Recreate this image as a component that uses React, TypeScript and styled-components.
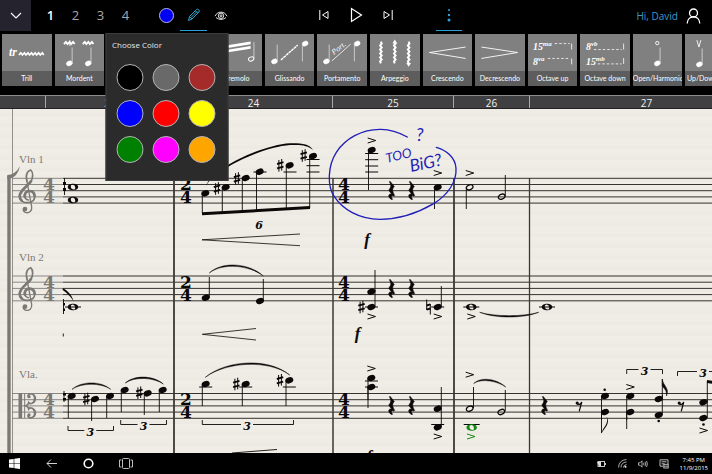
import React from "react";
import styled, { createGlobalStyle } from "styled-components";

const Global = createGlobalStyle`
  * { box-sizing: border-box; }
  html, body { margin: 0; background: #000; }
  body { font-family: "Open Sans", "Noto Sans", sans-serif; }
  button { font: inherit; border: 0; padding: 0; background: none; color: inherit; cursor: pointer; }
`;

const Page = styled.div`
  display: flex;
  flex-direction: column;
  height: 100vh;
  overflow: hidden;
  background: #000;
`;

const TopBar = styled.header`
  display: grid;
  grid-template-columns: 1fr auto 1fr;
  flex: none;
  height: 32px;
  color: #fff;
`;

const Group = styled.div<{ $spread?: boolean }>`
  display: flex;
  align-items: flex-start;
  justify-content: ${(p) => (p.$spread ? "space-between" : "flex-start")};
  padding: ${(p) => (p.$spread ? "0 11px 0 32px" : "0")};
`;

const BarButton = styled.button<{ $w: number; $active?: boolean }>`
  display: flex;
  align-items: center;
  justify-content: center;
  flex: none;
  width: ${(p) => p.$w}px;
  height: 31px;
  border-bottom: 1px solid ${(p) => (p.$active ? "#2b9fd6" : "transparent")};
`;

const MenuButton = styled(BarButton)`
  background: #24232e;
  margin-right: 7px;
`;

const VoiceButton = styled(BarButton)<{ $on?: boolean }>`
  font-size: 13px;
  font-weight: ${(p) => (p.$on ? 600 : 400)};
  color: ${(p) => (p.$on ? "#fff" : "#a8a8a8")};
`;

const ColorAnchor = styled.div`
  position: relative;
  margin-left: 15px;
`;

const CurrentColor = styled.span`
  width: 15px;
  height: 15px;
  border-radius: 50%;
  background: #0000f5;
  border: 1px solid #b9b9d8;
`;

const Popup = styled.section`
  position: absolute;
  z-index: 2;
  top: 33px;
  left: 50%;
  transform: translateX(-50%);
  width: 123px;
  height: 148px;
  padding: 4px 6px;
  background: #2b2b2b;
  border: 1px solid #3c3c3c;
`;

const PopupTitle = styled.h2`
  margin: 0;
  font-size: 8px;
  line-height: 14px;
  font-weight: 400;
  color: #e6e6e6;
`;

const Swatches = styled.div`
  display: grid;
  grid-template-columns: repeat(3, 27px);
  gap: 9px;
  padding: 12px 4px;
`;

const Swatch = styled.button<{ $color: string }>`
  width: 27px;
  height: 27px;
  border-radius: 50%;
  border: 1px solid #b4b4b4;
  background: ${(p) => p.$color};
`;

const UserLink = styled.a`
  display: flex;
  align-items: center;
  gap: 8px;
  height: 31px;
  font-size: 10px;
  color: #3a9ad0;
  text-decoration: none;
`;

const Palette = styled.nav`
  display: grid;
  grid-template-columns: repeat(14, minmax(0, 1fr));
  gap: 3px;
  flex: none;
  margin-right: -23px;
  padding: 2px 0 9px 2px;
`;

const Tile = styled.button`
  display: flex;
  flex-direction: column;
  height: 52px;
  background: #808080;
  color: #fff;
  overflow: hidden;
`;

const TileArt = styled.span`
  display: flex;
  justify-content: center;
  width: 100%;
  height: 37px;
`;

const TileLabel = styled.span`
  width: 100%;
  background: #5d5d5d;
  font-family: Lato, "Open Sans", sans-serif;
  font-size: 7px;
  line-height: 15px;
  text-align: center;
  white-space: nowrap;
`;

const Ruler = styled.div`
  display: flex;
  flex: none;
  height: 14px;
  background: #404042;
  border-top: 1px solid #8c8c8c;
  border-bottom: 1px solid #222;
  overflow: hidden;
`;

const Bar = styled.div<{ $w: number }>`
  flex: none;
  width: ${(p) => p.$w}px;
  border-right: 1px solid #a9a9a9;
  color: #f2f2f2;
  font-size: 10px;
  line-height: 14px;
  text-align: center;
`;

const Score = styled.main`
  flex: 1;
  min-height: 0;
  overflow: hidden;
  background: repeating-linear-gradient(180deg, #efebe5 0 4px, #edeae3 4px 7px, #f0ece6 7px 11px);

  svg { display: block; }
`;

const TaskBar = styled.footer`
  display: flex;
  align-items: center;
  justify-content: space-between;
  flex: none;
  height: 21px;
  padding: 0 4px 0 6px;
  color: #fff;
`;

const TaskGroup = styled.div<{ $gap: number }>`
  display: flex;
  align-items: center;
  gap: ${(p) => p.$gap}px;
`;

const TaskButton = styled.button`
  display: flex;
  align-items: center;
  justify-content: center;
  height: 21px;
  min-width: 17px;
`;

const Clock = styled.time`
  margin-left: 3px;
  font-size: 6px;
  line-height: 8px;
  text-align: center;
`;

const ink = { fill: "none", stroke: "currentColor" } as const;

/* ---------- palette drawings, on a 50 x 37 canvas ---------- */

const TileSvg = ({ children }: { children: React.ReactNode }) => (
  <svg width="50" height="37" viewBox="0 0 50 37" fill="#fff" stroke="none">{children}</svg>
);

const SmallNote = ({ x, y, h = 15, down, open }: { x: number; y: number; h?: number; down?: boolean; open?: boolean }) => (
  <g>
    <ellipse cx={x} cy={y} rx={open ? 2.8 : 3.1} ry={open ? 2 : 2.4} transform={`rotate(-25 ${x} ${y})`} fill={open ? "none" : "#fff"} stroke="#fff" strokeWidth={open ? 1 : 0.4} />
    <path d={down ? `M${x - 2.8} ${y}v${h + 2}` : `M${x + 2.8} ${y}v${-h}`} stroke="#ddd" strokeWidth="0.8" />
  </g>
);

const zigzag = (x: number, y: number, n: number) => {
  let d = `M${x} ${y}`;
  for (let i = 0; i < n; i++) d += "l2 -2.2l1.6 2.2";
  return d;
};

const art: Record<string, React.ReactNode> = {
  Trill: (
    <>
      <text x="7" y="22" fontFamily="Liberation Serif, serif" fontSize="12" fontWeight="700" fontStyle="italic">tr</text>
      <path d={zigzag(17, 21, 7)} {...ink} strokeWidth="1.6" />
    </>
  ),
  Mordent: (
    <>
      <path d={zigzag(9, 10, 3)} {...ink} strokeWidth="1.8" />
      <path d="M15 6v6" {...ink} strokeWidth="0.8" />
      <path d={zigzag(28, 10, 3)} {...ink} strokeWidth="1.8" />
      <SmallNote x={14.5} y={29.5} h={16} />
      <SmallNote x={33.5} y={29.5} h={16} />
    </>
  ),
  Turn: <path d="M17 19c0-7 7-4 8-1s8 6 8-1" {...ink} strokeWidth="2" />,
  Fall: <path d="M17 10c2 10 8 15 16 17" {...ink} strokeWidth="1.4" />,
  Tremolo: (
    <>
      <path d="M8 12.5l31-5v2.600l-31 5zM8 17l31-5v2.600l-31 5z" />
      <SmallNote x={39.500} y={25} h={17} open />
    </>
  ),
  Glissando: (
    <>
      <SmallNote x={9.500} y={27.500} h={17} />
      <path d="M16 26L33 11" {...ink} strokeWidth="1.4" strokeDasharray="3 .5" />
      <SmallNote x={40.500} y={9.500} h={16} down />
    </>
  ),
  Portamento: (
    <>
      <SmallNote x={9.500} y={27.500} h={17} />
      <path d="M15 27L34 10" {...ink} strokeWidth="0.8" />
      <text x="17" y="21" fontFamily="Liberation Serif, serif" fontSize="8" fontStyle="italic" transform="rotate(-38 17 21)">Port.</text>
      <SmallNote x={40.500} y={9.500} h={16} down />
    </>
  ),
  Arpeggio: (
    <>
      {[11, 25, 39].map((x) => (
        <path key={x} d={`M${x} 7.5l.8 2l-1.600 2l1.600 2l-1.600 2l1.600 2l-1.600 2l1.600 2l-1.600 2l1.600 2l-1.600 2l.8 2`} {...ink} strokeWidth="2" />
      ))}
      <path d="M25 5.500l2.400 4h-4.800zM39 33l2.400-4h-4.800z" />
    </>
  ),
  Crescendo: <path d="M43 13L6.500 18.500L43 24.500" {...ink} strokeWidth="0.9" />,
  Decrescendo: <path d="M6.500 13L43 18.500L6.500 24.500" {...ink} strokeWidth="0.9" />,
  "Octave up": (
    <g fontFamily="Liberation Serif, serif" fontWeight="700" fontStyle="italic">
      <text x="5" y="16" fontSize="10">15</text><text x="15" y="12" fontSize="7">ma</text>
      <text x="5" y="31" fontSize="10">8</text><text x="10" y="27" fontSize="7">va</text>
      <path d="M27 9.500H42M20 24.500H42" {...ink} strokeWidth="0.8" strokeDasharray="2.500 2" />
      <path d="M44 9.500v6M44 24.500v6" {...ink} strokeWidth="0.8" />
    </g>
  ),
  "Octave down": (
    <g fontFamily="Liberation Serif, serif" fontWeight="700" fontStyle="italic">
      <text x="6" y="16" fontSize="10">8</text><text x="11" y="12" fontSize="7">vb</text>
      <text x="6" y="31" fontSize="10">15</text><text x="16" y="27" fontSize="7">mb</text>
      <path d="M14 15.500H42M18 30H42" {...ink} strokeWidth="0.8" strokeDasharray="2.500 2" />
      <path d="M44 9.500v6M44 24v6" {...ink} strokeWidth="0.8" />
    </g>
  ),
  "Open/Harmonic": (
    <>
      <circle cx="24.500" cy="9" r="1.700" {...ink} strokeWidth="0.9" />
      <SmallNote x={24.500} y={29.500} h={16} />
    </>
  ),
  "Up/Down Bow": (
    <>
      <path d="M12 6l2 7l2-7" {...ink} strokeWidth="0.9" />
      <SmallNote x={14.500} y={30.500} h={16} />
      <path d="M32 13v-6h5v6" {...ink} strokeWidth="0.9" />
      <SmallNote x={34.500} y={30.500} h={16} />
    </>
  ),
};

/* ---------- notation symbols ---------- */

const Head = ({ x, y, open }: { x: number; y: number; open?: boolean }) => (
  <g transform={`translate(${x} ${y}) rotate(-22)`}>
    <ellipse rx={open ? 3.5 : 4.1} ry={open ? 2.4 : 3} fill={open ? "none" : "currentColor"} stroke={open ? "currentColor" : "none"} strokeWidth="1.3" />
  </g>
);

const Whole = ({ x, y }: { x: number; y: number }) => (
  <path
    transform={`translate(${x} ${y})`}
    fillRule="evenodd"
    d="M-5.200 0C-5.200-4.300 5.200-4.300 5.200 0S-5.200 4.300-5.200 0ZM-2.200-.8C-2.400 1.700 0 2.800 1.400 2.400C3.200 1.500 2 -2.600 -.4 -2.600C-1.500-2.600-2.100-1.900-2.200-.8Z"
  />
);

const V = ({ x, a, b, w = 0.9 }: { x: number; a: number; b: number; w?: number }) => (
  <path d={`M${x} ${a}V${b}`} {...ink} strokeWidth={w} />
);

const Ledger = ({ x, y, r = 6.500 }: { x: number; y: number; r?: number }) => (
  <path d={`M${x - r} ${y}H${x + r}`} {...ink} strokeWidth="1" />
);

const Sharp = ({ x, y }: { x: number; y: number }) => (
  <g transform={`translate(${x} ${y})`} {...ink}>
    <path d="M-1.400-5.300V6.300M1.400-6.300V5.300" strokeWidth="1" />
    <path d="M-3.200-1.300L3.200-3.100M-3.200 3.100L3.200 1.300" strokeWidth="1.900" />
  </g>
);

const Natural = ({ x, y }: { x: number; y: number }) => (
  <g transform={`translate(${x} ${y})`} {...ink}>
    <path d="M-1.800-7.500V3M1.800-3V7.500" strokeWidth="1" />
    <path d="M-1.800-1.500L1.800-2.700M-1.800 2.700L1.800 1.500" strokeWidth="1.900" />
  </g>
);

const Accent = ({ x, y }: { x: number; y: number }) => (
  <path d={`M${x - 4} ${y - 2.500}L${x + 4} ${y}L${x - 4} ${y + 2.500}`} {...ink} strokeWidth="1" />
);

const Rest = ({ x, y }: { x: number; y: number }) => (
  <path
    transform={`translate(${x} ${y}) scale(.3333) translate(-202 -226)`}
    d="M196 198L209 214C202 222 203 227 210 241L208 243C200 239 197 244 204 252L202 254C189 248 189 234 201 237L192 225C200 216 200 210 194 200Z"
    stroke="currentColor"
    strokeWidth="1.500"
  />
);

const EighthRest = ({ x, y }: { x: number; y: number }) => (
  <g transform={`translate(${x} ${y})`}>
    <circle cx="-1.800" cy="-3.500" r="1.600" />
    <path d="M-2-2.500C0-1.500 2-2.500 2.800-4.500L.2 4.800" {...ink} strokeWidth="1.200" />
  </g>
);

const Slur = ({ x1, y1, x2, y2, rise }: { x1: number; y1: number; x2: number; y2: number; rise: number }) => {
  const q = (x2 - x1) / 4;
  return (
    <path
      d={`M${x1} ${y1}C${x1 + q} ${y1 - rise} ${x2 - q} ${y2 - rise} ${x2} ${y2}C${x2 - q} ${y2 - rise + 1.800} ${x1 + q} ${y1 - rise + 1.800} ${x1} ${y1}Z`}
      stroke="currentColor"
      strokeWidth="0.5"
    />
  );
};

const Num = ({ x, y, children }: { x: number; y: number; children: string }) => (
  <text x={x} y={y + 4} textAnchor="middle" fontFamily="DejaVu Serif, serif" fontWeight="700" fontStyle="italic" fontSize="11">{children}</text>
);

const Tuplet = ({ x1, x2, y, h, n }: { x1: number; x2: number; y: number; h: number; n: number }) => (
  <g>
    <path d={`M${x1} ${y + h}V${y}H${n - 6}M${n + 6} ${y}H${x2}V${y + h}`} {...ink} strokeWidth="0.9" />
    <Num x={n} y={y + 1}>3</Num>
  </g>
);

const Meter = ({ x, top, beats }: { x: number; top: number; beats: string }) => (
  <g fontFamily="DejaVu Serif, serif" fontWeight="700" fontSize="17" textAnchor="middle">
    <text x={x} y={top + 12}>{beats}</text>
    <text x={x} y={top + 25}>4</text>
  </g>
);

const Forte = ({ x, y }: { x: number; y: number }) => (
  <text x={x} y={y} textAnchor="middle" fontFamily="Liberation Serif, serif" fontWeight="700" fontStyle="italic" fontSize="17">f</text>
);

const Treble = ({ y }: { y: number }) => (
  <g transform={`translate(0 ${y}) scale(.3333) translate(0 -114)`} {...ink} strokeLinecap="round">
    <path d="M81 124C75 102 84 92 92 90C101 98 99 114 92 126C83 138 59 149 59 168C59 183 72 189 84 188C99 187 105 178 104 168C103 157 96 152 88 153C77 154 71 163 74 171C76 176 79 179 85 180" strokeWidth="5" />
    <path d="M93 124C82 140 60 150 59 168C59 174 61 179 65 182M75 171C72 161 79 153 88 153C97 153 103 158 104 168" strokeWidth="8" />
    <path d="M80 120L95 200C97 214 87 219 79 218C72 217 69 213 70 207" strokeWidth="4" />
    <circle cx="75" cy="207" r="7" fill="currentColor" stroke="none" />
  </g>
);

const Alto = ({ y }: { y: number }) => (
  <g transform={`translate(0 ${y}) scale(.3333) translate(0 -115)`} {...ink}>
    <path d="M61 115V190" strokeWidth="11" />
    <path d="M74 115V190" strokeWidth="3" />
    <path d="M84 124C82 114 104 112 104 130C104 148 90 148 86 143C85 149 81 151 77 152.500C81 154 85 156 86 162C90 157 104 157 104 175C104 193 82 191 84 181" strokeWidth="5" />
    <path d="M102 120C108 128 106 136 102 142M102 163C108 170 106 179 102 185" strokeWidth="5" />
    <circle cx="87" cy="125" r="5" fill="currentColor" stroke="none" />
    <circle cx="87" cy="180" r="5" fill="currentColor" stroke="none" />
  </g>
);

const Staff = ({ y }: { y: number }) => (
  <g {...ink}>
    {[0, 1, 2, 3, 4].map((i) => {
      const ly = y + i * 6.200;
      return (
        <g key={i}>
          <path d={`M12 ${ly}H63`} stroke="#8a8783" strokeWidth="1" />
          <path d={`M63 ${ly}H4000`} stroke="#35322f" strokeWidth="1" />
        </g>
      );
    })}
  </g>
);

const rests: [number, number][] = [
  [392, 190.500], [412, 190.500], [392, 288.500], [412, 288.500], [392, 405.500], [412, 405.500], [545, 405.500],
];

/* [head x, head y, stem x, stem end] */
const stemmed: [number, number, number, number][] = [
  [205.300, 193.300, 202.300, 213], [225.700, 187.300, 222.300, 213], [245.700, 178, 242.300, 212],
  [259.700, 171.700, 256.500, 211], [289.700, 165.300, 286.300, 210], [313, 156, 309.700, 208],
  [371.700, 150, 368.500, 190], [437.700, 187.300, 434.500, 209],
  [205.700, 297.700, 209.300, 277], [260, 301, 263.300, 279],
  [371.300, 291.700, 375, 270], [371.300, 307, 375, 290], [437.700, 307, 441.300, 286],
  [71.700, 396, 68.300, 418], [95, 399, 91.600, 421], [110, 396, 106.700, 418],
  [124.700, 390, 121.300, 412], [147.700, 393.300, 144.300, 415], [162.700, 390, 159.300, 412],
  [205.700, 384, 202.300, 406], [245.700, 384, 242.300, 406], [289.300, 380.300, 286, 406],
  [371.300, 378, 368, 400], [371.300, 387, 368, 408], [437.700, 408.700, 441.300, 387], [437.700, 427.300, 441.300, 408],
  [605, 396, 601.500, 420], [605, 412, 601.500, 433], [630.300, 396, 626.700, 420], [630.300, 412, 626.700, 429],
  [658.700, 399, 662.300, 379], [658.700, 415, 662.300, 395], [703.300, 402.300, 707.300, 381], [703.300, 418, 707.300, 400],
];

const Notation = () => (
  <svg width="100%" height="344" fill="currentColor" color="#0a0908" role="img" aria-label="Score, measures 23 to 27">
    <g transform="translate(0 -109)">
      <Staff y={178.300} />
      <Staff y={276} />
      <Staff y={393.500} />

      <g color="#3b3835">
        <V x={174} a={178} b={453} w={1.800} />
        <V x={333} a={178} b={453} w={1.500} />
        <V x={454} a={178} b={453} w={1.800} />
        <V x={529.500} a={178} b={453} w={1.300} />
      </g>

      <g color="#7b7875">
        <V x={12.500} a={109} b={453} w={0.800} />
        <V x={9} a={176} b={453} w={3.400} />
        <path d="M7.300 175C12 175 17 172 20 166C18 174 15 178 7.300 179Z" />
        <g fontFamily="Liberation Serif, serif" fontSize="11">
          <text x="19" y="163">Vln 1</text>
          <text x="19" y="261">Vln 2</text>
          <text x="19" y="378">Vla.</text>
        </g>
        <Treble y={178} />
        <Treble y={275.700} />
        <Alto y={393.300} />
        <Meter x={49} top={178} beats="4" />
        <Meter x={49} top={275.700} beats="4" />
        <Meter x={49} top={393.300} beats="4" />
      </g>
      {[178, 275.700, 393.300].map((top) => (
        <g key={top}>
          <Meter x={186} top={top} beats="2" />
          <Meter x={344} top={top} beats="4" />
        </g>
      ))}

      {stemmed.map(([x, y, sx, end]) => (
        <g key={`${x}-${y}`}>
          <Head x={x} y={y} />
          <V x={sx} a={y} b={end} />
        </g>
      ))}
      {rests.map(([x, y]) => <Rest key={`${x}-${y}`} x={x} y={y} />)}

      {/* first violin */}
      <V x={64.500} a={178} b={195} />
      <path d="M63 182h3v3h-3zM63 188h3v3h-3z" />
      <Whole x={73} y={187} />
      <Whole x={73} y={200} />
      <path d="M202 212.300L310 206V209L202 215.300Z" />
      <Sharp x={217} y={188.500} />
      <Sharp x={237} y={178.500} />
      <Sharp x={280.300} y={165.300} />
      <Sharp x={303.700} y={155.500} />
      <Ledger x={260} y={172} />
      <Ledger x={290} y={172} />
      <Ledger x={313} y={172} />
      <Ledger x={313} y={165.700} />
      <Ledger x={313} y={159.500} />
      <path d="M206 186C212 168 262 145 290 143.200C302 143 310 144 313 150C308 145.500 302 144.500 290 145C262 147 214 170 206 186Z" />
      <Num x={259} y={225}>6</Num>
      <path d="M300 234L202 239.800L300 245.700" {...ink} strokeWidth="0.800" />
      <Ledger x={371.700} y={153.500} />
      <Ledger x={371.700} y={159.700} />
      <Ledger x={371.700} y={166} />
      <Ledger x={371.700} y={172} />
      <Accent x={371.700} y={140.500} />
      <Accent x={437.700} y={173} />
      <Accent x={469.700} y={173} />
      <Forte x={367} y={245} />
      <Head x={469.700} y={187.300} open />
      <V x={466.300} a={187.300} b={209} />
      <Head x={501.700} y={196.700} open />
      <V x={505.300} a={196} b={175} />

      {/* second violin */}
      <path d="M62.700 288C67 290 72 295 73.500 301C70 296 67 293 62.700 290Z" />
      <V x={63.500} a={299} b={314} />
      <path d="M63 303h2v2.500h-2zM63 308.500h2v2.500h-2z" />
      <V x={63.300} a={333.500} b={336.500} />
      <Whole x={73} y={307} />
      <Ledger x={73} y={307} r={8} />
      <Slur x1={209.300} y1={273} x2={263.300} y2={276} rise={12.500} />
      <path d="M256 328.500L202.300 334.300L256 340" {...ink} strokeWidth="0.800" />
      <Sharp x={361.500} y={307} />
      <Ledger x={371.500} y={307} />
      <Accent x={371.500} y={316.500} />
      <Natural x={428.500} y={307} />
      <Ledger x={437.700} y={307} />
      <Accent x={437.700} y={316.500} />
      <Whole x={471.300} y={307} />
      <Ledger x={471.300} y={307} r={8} />
      <Accent x={471.300} y={316.500} />
      <Slur x1={479.700} y1={312.300} x2={538.700} y2={312.300} rise={-4.500} />
      <Whole x={547} y={307} />
      <Ledger x={547} y={307} r={8} />
      <Forte x={357.700} y={339} />

      {/* viola */}
      <V x={64} a={391} b={402} />
      <path d="M63 393h3v2.500h-3zM63 398h3v2.500h-3z" />
      <Sharp x={86.300} y={399} />
      <Sharp x={139.300} y={392.700} />
      <Sharp x={236.300} y={384} />
      <Sharp x={280} y={380.300} />
      <Slur x1={72} y1={389.300} x2={110.700} y2={389.300} rise={8.500} />
      <Slur x1={125.300} y1={383} x2={163.300} y2={384} rise={8.500} />
      <Slur x1={205.300} y1={377.300} x2={289.700} y2={375} rise={17.500} />
      <Ledger x={205.700} y={387} />
      <Ledger x={245.700} y={387} />
      <Ledger x={289.300} y={387} />
      <Tuplet x1={68} x2={113.500} y={430.500} h={-4.500} n={90.300} />
      <Tuplet x1={120.700} x2={166.500} y={424.500} h={-4.500} n={143.500} />
      <Tuplet x1={202.300} x2={293.500} y={424.500} h={-4.500} n={247} />
      <path d="M232 453L277 449.500" {...ink} strokeWidth="0.900" />
      <Accent x={371.300} y={368.500} />
      <Ledger x={371.500} y={381} />
      <Ledger x={371.500} y={387} />
      <Ledger x={437.700} y={424.500} />
      <Accent x={437.700} y={436.500} />
      <Forte x={369} y={462} />
      <Accent x={469.700} y={374.700} />
      <Head x={469.700} y={408.700} open />
      <V x={473.500} a={408} b={387} />
      <Head x={501.300} y={412} open />
      <V x={505.300} a={411} b={390} />
      <Slur x1={473.700} y1={383.500} x2={505.700} y2={387} rise={7.500} />
      <Ledger x={471.700} y={424.500} r={8} />
      <g color="#148a14" fill="#148a14">
        <Whole x={471.700} y={427.500} />
        <Accent x={471} y={436.500} />
      </g>
      <EighthRest x={579} y={406.500} />
      <EighthRest x={681} y={406.500} />
      <circle cx="604.700" cy="389.700" r="1.300" />
      <circle cx="658.700" cy="421" r="1.300" />
      <circle cx="703.500" cy="424.500" r="1.300" />
      <path d="M601.300 434C603 426 609 425 606.500 416.500C611 424 604 428 601.300 434Z" />
      <path d="M662.300 379C663 386 670 388 666.500 396C667 389 663 388 662.300 386Z" stroke="currentColor" strokeWidth="0.500" />
      <Accent x={630.300} y={387} />
      <Accent x={703.500} y={430.500} />
      <Tuplet x1={626.700} x2={662.500} y={369.500} h={4.500} n={644.500} />
      <Tuplet x1={677.500} x2={728} y={371.500} h={4.500} n={703} />
      <path d="M707 380L728 383V386L707 383Z" />

      {/* reviewer's pen marks */}
      <g color="#1f1fb8">
        <g transform="translate(325 115) scale(.3333)" {...ink} strokeWidth="4" strokeLinecap="round">
          <path d="M247 66C222 52 190 43 168 43C110 42 60 72 34 112C8 152 6 214 28 245C52 282 102 313 165 313C225 313 285 290 326 266C368 240 396 200 393 160C391 126 362 105 334 97" />
        </g>
        <g fontFamily="Lato, sans-serif" fontStyle="italic" fontSize="17" fill="#1f1fb8">
          <text x="387" y="163" fontSize="13" transform="rotate(-14 387 163)">TOO</text>
          <text x="416" y="141" fontSize="18">?</text>
          <text x="411" y="172" transform="rotate(-12 411 172)">BiG?</text>
        </g>
      </g>
    </g>
  </svg>
);

const swatches = [
  ["Black", "#000"], ["Gray", "#696969"], ["Brown", "#a52a2a"],
  ["Blue", "#00f"], ["Red", "#f00"], ["Yellow", "#ff0"],
  ["Green", "#008000"], ["Magenta", "#f0f"], ["Orange", "#ffa500"],
];

const bars: [string, number][] = [["", 46], ["23", 129], ["24", 158], ["25", 121], ["26", 76], ["27", 234]];

export default function App() {
  return (
    <Page>
      <Global />
      <TopBar>
        <Group>
          <MenuButton $w={31} aria-label="Open menu">
            <svg width="12" height="7" viewBox="0 0 12 7" {...ink} strokeWidth="1.100"><path d="M1 1l5 5l5-5" /></svg>
          </MenuButton>
          {["1", "2", "3", "4"].map((n) => (
            <VoiceButton key={n} $w={25} $on={n === "1"}>{n}</VoiceButton>
          ))}
          <ColorAnchor>
            <BarButton $w={27} aria-label="Ink color"><CurrentColor /></BarButton>
            <Popup>
              <PopupTitle>Choose Color</PopupTitle>
              <Swatches>
                {swatches.map(([name, color]) => <Swatch key={name} $color={color} aria-label={name} />)}
              </Swatches>
            </Popup>
          </ColorAnchor>
          <BarButton $w={27} $active aria-label="Pen">
            <svg width="14" height="14" viewBox="0 0 14 14" fill="none" stroke="#2fa3cf" strokeWidth="1">
              <path d="M1.500 12.500l1-4L9.500 1.500q1-1 2.200.3t.2 2.200L5 11z M2.500 8.500L5 11M8.300 2.700l2.500 2.500M4 9.500L10 3.500" />
            </svg>
          </BarButton>
          <BarButton $w={27} aria-label="Show ink">
            <svg width="14" height="9" viewBox="0 0 14 9" {...ink} strokeWidth="0.900">
              <path d="M1 5.200C3.500-.2 10.500-.2 13 5.200M2 6.500C5 9 9 9 12 6.500" /><circle cx="7" cy="4.800" r="2.700" /><circle cx="7" cy="4.800" r="1" />
            </svg>
          </BarButton>
        </Group>
        <Group>
          <BarButton $w={32} aria-label="Previous">
            <svg width="10" height="10" viewBox="0 0 10 10" {...ink}><path d="M.8 0v10M9 1.500v7L3.500 5z" /></svg>
          </BarButton>
          <BarButton $w={32} aria-label="Play">
            <svg width="13" height="16" viewBox="0 0 13 16" {...ink} strokeWidth="1.200"><path d="M1.500 1.500v13L11.500 8z" /></svg>
          </BarButton>
          <BarButton $w={32} aria-label="Next">
            <svg width="10" height="10" viewBox="0 0 10 10" {...ink}><path d="M9.200 0v10M1 1.500v7L6.500 5z" /></svg>
          </BarButton>
        </Group>
        <Group $spread>
          <BarButton $w={26} $active aria-label="More">
            <svg width="4" height="14" viewBox="0 0 4 14" fill="#2fa0e0"><circle cx="2" cy="2" r="1" /><circle cx="2" cy="7" r="1.200" /><circle cx="2" cy="12" r="1.500" /></svg>
          </BarButton>
          <UserLink href="#account">
            Hi, David
            <svg width="15" height="16" viewBox="0 0 15 16" fill="none" stroke="#fff" strokeWidth="1.300"><circle cx="7.500" cy="5" r="4" /><path d="M1.200 15.500C1.500 6.500 13.500 6.500 13.800 15.500" /></svg>
          </UserLink>
        </Group>
      </TopBar>

      <Palette aria-label="Ornaments">
        {Object.entries(art).map(([name, drawing]) => (
          <Tile key={name}>
            <TileArt><TileSvg>{drawing}</TileSvg></TileArt>
            <TileLabel>{name}</TileLabel>
          </Tile>
        ))}
      </Palette>

      <Ruler>
        {bars.map(([n, w]) => <Bar key={w} $w={w}>{n}</Bar>)}
      </Ruler>

      <Score><Notation /></Score>

      <TaskBar>
        <TaskGroup $gap={20}>
          <TaskButton aria-label="Start">
            <svg width="11" height="11" viewBox="0 0 11 11" fill="#fff"><path d="M0 1.500L4.700.9v4.300H0zM5.300.8L11 0v5.200H5.300zM0 5.800h4.700v4.300L0 9.500zM5.300 5.800H11V11l-5.700-.8z" /></svg>
          </TaskButton>
          <TaskButton aria-label="Back">
            <svg width="11" height="9" viewBox="0 0 11 9" fill="none" stroke="#d0d0d0"><path d="M11 4.500H1M5 .5l-4 4l4 4" /></svg>
          </TaskButton>
          <TaskButton aria-label="Search">
            <svg width="11" height="11" viewBox="0 0 11 11" fill="none" stroke="#fff" strokeWidth="1.600"><circle cx="5.500" cy="5.500" r="4.300" /></svg>
          </TaskButton>
          <TaskButton aria-label="Task view">
            <svg width="14" height="11" viewBox="0 0 14 11" fill="none" stroke="#bbb"><rect x="3.500" y=".5" width="7" height="10" rx="1" /><path d="M2.500 2H.5v7h2M11.500 2h2v7h-2" /></svg>
          </TaskButton>
        </TaskGroup>
        <TaskGroup $gap={4}>
          <TaskButton aria-label="Battery">
            <svg width="9" height="6" viewBox="0 0 9 6" fill="none" stroke="#ddd" strokeWidth="0.900"><rect x="1" y=".5" width="6.500" height="5" /><path d="M8.500 2v2" /><path d="M0 1h4v4H2z" fill="#ddd" stroke="none" /></svg>
          </TaskButton>
          <TaskButton aria-label="Network">
            <svg width="9" height="9" viewBox="0 0 9 9" fill="none" stroke="#aaa" strokeWidth="1"><path d="M.5 8.500Q1 1 8.500.5M3 8.500Q3 3.500 8.500 3M5.500 8.500Q5.500 6 8.500 5.500" /><circle cx="7.500" cy="7.700" r="1" fill="#eee" stroke="none" /></svg>
          </TaskButton>
          <TaskButton aria-label="Volume">
            <svg width="10" height="8" viewBox="0 0 10 8" fill="none" stroke="#ccc" strokeWidth="0.800"><path d="M.5 2.800h1.500L4 .8v6.400L2 5.200H.5zM5.500 2.800q1 1.200 0 2.400M7 1.800q1.500 2.200 0 4.400M8.500 1q1.800 3 0 6" /></svg>
          </TaskButton>
          <TaskButton aria-label="Notifications">
            <svg width="10" height="10" viewBox="0 0 10 10" fill="none" stroke="#ccc" strokeWidth="0.900"><path d="M9 5V.8H1v6.400h3M2.500 2.800h5M2.500 4.800h3" /><rect x="4.800" y="5.300" width="4.400" height="3.700" /><path d="M5 7.200h4" /></svg>
          </TaskButton>
          <Clock>7:45 PM<br />11/9/2015</Clock>
        </TaskGroup>
      </TaskBar>
    </Page>
  );
}
